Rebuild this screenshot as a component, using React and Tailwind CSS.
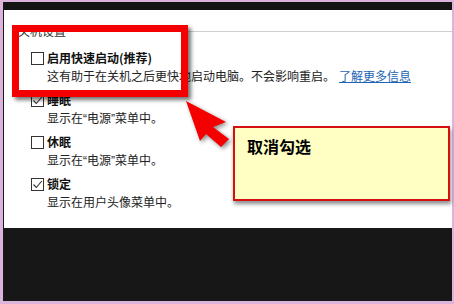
import React from "react";

const font = { fontFamily: '"Noto Sans CJK SC", "Noto Sans", sans-serif' };

const Q = ({ children }) => (
  <span style={{ fontFamily: '"Liberation Sans", sans-serif' }}>{children}</span>
);

const Box = ({ checked }) => (
  <span className="w-[13px] h-[13px] border border-[#333] bg-white flex items-center justify-center shrink-0">
    {checked && (
      <svg width="11" height="11" viewBox="0 0 11 11">
        <path d="M1.5 5.5 L4.3 8.5 L9.8 2" fill="none" stroke="#333" strokeWidth="1.1" />
      </svg>
    )}
  </span>
);

const Option = ({ checked, title, children }) => (
  <div className="flex flex-col">
    <div className="flex items-center h-[18px] gap-[3px]">
      <Box checked={checked} />
      <span className="text-[12px] font-bold text-[#111] leading-[18px]">{title}</span>
    </div>
    <div className="pl-[16px] h-[18px] text-[12px] leading-[18px] text-[#222] whitespace-nowrap">
      {children}
    </div>
  </div>
);

export default function App() {
  return (
    <div
      className="relative w-[454px] h-[304px] bg-[#dbb3db] pl-[3px] pt-[2px] pr-[2px] pb-[3px] overflow-hidden"
      style={font}
    >
      <div className="flex flex-col h-full border-l border-[#1a1a1a]">
        <div className="h-[8px] bg-[#141414]" />
        <div className="h-[218px] bg-white pt-[12px]">
          <div className="flex items-center h-[18px] pl-[14px] gap-[4px]">
            <span className="text-[12px] text-[#333] leading-[18px]">关机设置</span>
            <div className="flex-1 h-px bg-[#cfcfcf]" />
          </div>
          <div className="flex flex-col gap-[6px] pl-[27px] mt-[9px]">
            <Option checked={false} title="启用快速启动(推荐)">
              这有助于在关机之后更快地启动电脑。不会影响重启。
              <span className="ml-[4px] text-[#1c64b4] underline">了解更多信息</span>
            </Option>
            <Option checked title="睡眠">
              显示在<Q>“</Q>电源<Q>”</Q>菜单中。
            </Option>
            <Option checked={false} title="休眠">
              显示在<Q>“</Q>电源<Q>”</Q>菜单中。
            </Option>
            <Option checked title="锁定">
              显示在用户头像菜单中。
            </Option>
          </div>
        </div>
        <div className="flex-1 bg-[#171717]" />
      </div>

      {/* red highlight frame */}
      <div className="absolute left-[12px] top-[25px] w-[176px] h-[72px] border-[7px] border-[#f40000] shadow-[3px_3px_4px_rgba(0,0,0,0.55)]" />

      {/* arrow */}
      <svg
        className="absolute left-0 top-0"
        width="454"
        height="304"
        style={{ filter: "drop-shadow(2px 2px 2px rgba(0,0,0,0.45))", pointerEvents: "none" }}
      >
        <polygon
          points="186,101 226,122 213,127 229,139 221,147 206,134 200,141"
          fill="#f40000"
        />
      </svg>

      {/* callout */}
      <div className="absolute left-[233px] top-[126px] w-[217px] h-[75px] bg-[#ffffc4] border-2 border-[#d41010] shadow-[1px_3px_4px_rgba(0,0,0,0.45)] pl-[12px] pt-[6px]">
        <span className="text-[16px] font-bold text-black leading-[22px]">取消勾选</span>
      </div>
    </div>
  );
}
